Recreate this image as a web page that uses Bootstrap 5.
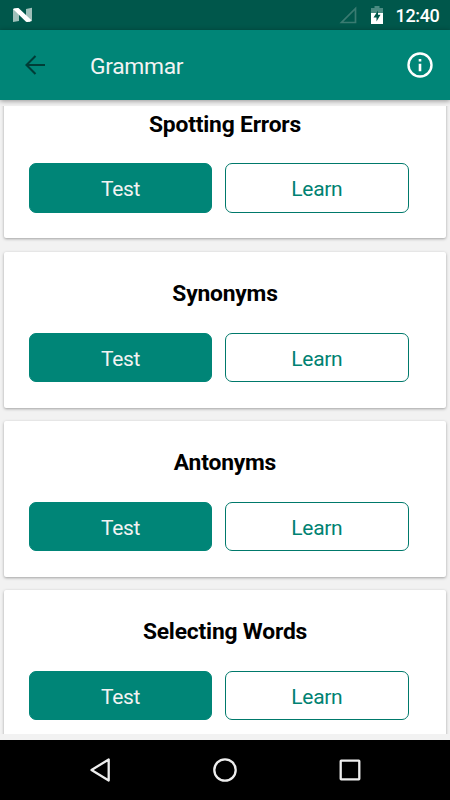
<!DOCTYPE html>
<html lang="en">
<head>
<meta charset="utf-8">
<meta name="viewport" content="width=device-width, initial-scale=1">
<title>Grammar</title>
<link href="https://cdn.jsdelivr.net/npm/bootstrap@5.3.0/dist/css/bootstrap.min.css" rel="stylesheet">
<style>
  body { font-family: Roboto, sans-serif; background: #f2f2f2; }
  .screen { height: 800px; }
  .status { flex: none; height: 30px; background: #00574b; padding: 0 10.5px 0 12px; }
  .signal { margin-right: 14px; }
  .clock { font-size: 18px; font-weight: 500; line-height: 30px; letter-spacing: -.35px; margin-left: 12.5px; padding-top: 1px; }
  .appbar { flex: none; height: 70px; background: #008577; padding: 0 16px 0 22px; box-shadow: 0 1px 5px rgba(0,0,0,.4); z-index: 1; }
  .appbar-title { font-size: 22.8px; letter-spacing: -.3px; line-height: 30px; color: #f3f3f3; margin-left: 42px; padding-top: 3px; }
  .topics { flex: 1 1 0; margin: 6px 0; min-height: 0; padding: 0 4px; }
  .topic-list { gap: 13.2px; margin-top: -23.6px; }
  .topic { height: 156px; flex: none; border-radius: 2px; padding: 28.1px 37.5px 0 25px; box-shadow: 0 1px 3px rgba(0,0,0,.34); }
  .topic-name { font-size: 22.8px; font-weight: 700; letter-spacing: -.18px; line-height: 28px; margin: 0 -37.5px 24.9px -25px; color: #000; }
  .topic-actions { gap: 13px; }
  .topic .btn { flex: 1; height: 49.5px; padding: 1px 0 0; font-size: 21px; letter-spacing: -.3px; line-height: 48px; border-radius: 7px; }
  .btn-test, .btn-test:hover { background: #008577; border-color: #008577; color: #f2f2f2; }
  .btn-learn, .btn-learn:hover { background: #fff; border-color: #00796b; color: #008272; }
  .sysnav { flex: none; height: 60px; background: #000; }
  svg { display: block; }
</style>
<script src="https://cdn.jsdelivr.net/npm/bootstrap@5.3.0/dist/js/bootstrap.bundle.min.js"></script>
</head>
<body>
<div class="screen d-flex flex-column overflow-hidden">
  <div class="status d-flex align-items-center text-white">
    <svg width="22" height="16" viewBox="0 0 22 16"><path d="M1 2 L3 1.200 L7 5 V14 L1 15Z M14 2 L20 .8 V14 L17.500 15 L14 11Z" fill="#9ebfb9"/><path d="M1 2 Q4 .5 6.500 1 L19.500 13.200 Q17 15.800 14 14.800Z" fill="#fff"/></svg>
    <svg class="signal ms-auto" width="18" height="18" viewBox="0 0 18 18"><path d="M2.500 16.500H16.500V2.500Z" fill="none" stroke="#397b71" stroke-width="1.700"/></svg>
    <svg width="12" height="18" viewBox="0 0 12 18"><path d="M0 7V2H3.500V0H8.500V2H12V7Z" fill="#4b8b82"/><path d="M0 7H12V18H0Z" fill="#fff"/><path d="M7 4.500 L2.500 11.500H5.500V15.500L9.500 8.800H7Z" fill="#00574b"/></svg>
    <span class="clock">12:40</span>
  </div>
  <header class="appbar d-flex align-items-center position-relative">
    <svg width="26" height="26" viewBox="0 0 26 26"><path d="M23 13H5.500M13.500 4 L4.500 13 L13.500 22" fill="none" stroke="#003d37" stroke-width="2.100"/></svg>
    <span class="appbar-title">Grammar</span>
    <svg class="ms-auto" width="28" height="28" viewBox="0 0 28 28"><circle cx="14" cy="14" r="11.500" fill="none" stroke="#fff" stroke-width="2.400"/><path d="M12.700 8H15.300V10.500H12.700ZM12.700 12.800H15.300V20.200H12.700Z" fill="#fff"/></svg>
  </header>
  <main class="topics overflow-hidden">
    <div class="topic-list d-flex flex-column">
      <section class="topic bg-white"><h2 class="topic-name text-center">Spotting Errors</h2><div class="topic-actions d-flex"><button class="btn btn-test">Test</button><button class="btn btn-learn">Learn</button></div></section>
      <section class="topic bg-white"><h2 class="topic-name text-center">Synonyms</h2><div class="topic-actions d-flex"><button class="btn btn-test">Test</button><button class="btn btn-learn">Learn</button></div></section>
      <section class="topic bg-white"><h2 class="topic-name text-center">Antonyms</h2><div class="topic-actions d-flex"><button class="btn btn-test">Test</button><button class="btn btn-learn">Learn</button></div></section>
      <section class="topic bg-white"><h2 class="topic-name text-center">Selecting Words</h2><div class="topic-actions d-flex"><button class="btn btn-test">Test</button><button class="btn btn-learn">Learn</button></div></section>
    </div>
  </main>
  <nav class="sysnav d-flex justify-content-center align-items-center">
    <svg width="330" height="60" viewBox="0 0 330 60" fill="none" stroke="#eee" stroke-width="2.300" stroke-linejoin="round"><path d="M48.700 19.500V40.500L31.500 30Z"/><circle cx="165" cy="30" r="10.700"/><rect x="280.700" y="20.700" width="18.600" height="18.600" rx=".5"/></svg>
  </nav>
</div>
</body>
</html>
